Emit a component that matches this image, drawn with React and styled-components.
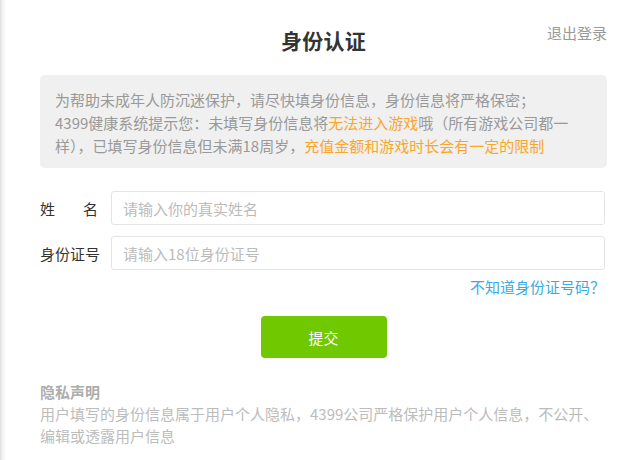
import React from "react";
import styled, { createGlobalStyle } from "styled-components";

const Global = createGlobalStyle`
  html, body { margin: 0; padding: 0; background: #fff; }
  body { font-family: "Noto Sans CJK SC", "Noto Sans", sans-serif; }
  * { box-sizing: border-box; }
`;

const Page = styled.div`
  width: 636px;
  height: 460px;
  overflow: hidden;
  padding: 0 29px 0 40px;
  background: linear-gradient(to right, #dcdcdc 0, #efefef 2px, #fff 6px);
  color: #333;
`;

const Header = styled.div`
  display: grid;
  grid-template-columns: 1fr auto 1fr;
  padding-top: 22px;
  height: 58px;
`;

const Title = styled.h1`
  grid-column: 2;
  margin: 0;
  font-size: 21px;
  line-height: 36px;
  font-weight: 700;
  color: #333;
  letter-spacing: 0.3px;
`;

const Logout = styled.a`
  grid-column: 3;
  justify-self: end;
  align-self: start;
  font-size: 15px;
  line-height: 22px;
  color: #999;
  text-decoration: none;
  margin-top: 0;
`;

const Notice = styled.div`
  margin-top: 17px;
  background: #f0f0f0;
  border-radius: 5px;
  padding: 13px 15px 11px 15px;
  font-size: 15px;
  line-height: 23px;
  color: #999;
`;

const Hi = styled.span`
  color: #f8a72b;
`;

const Form = styled.div`
  margin-top: 23px;
  padding-right: 2px;
  display: flex;
  flex-direction: column;
  gap: 11px;
`;

const Row = styled.div`
  display: flex;
  align-items: center;
  gap: 13px;
`;

const Label = styled.label`
  width: 58px;
  flex: none;
  display: flex;
  justify-content: space-between;
  font-size: 15px;
  color: #333;
  white-space: nowrap;
`;

const Input = styled.input`
  flex: 1;
  height: 34px;
  border: 1px solid #e4e4e4;
  border-radius: 3px;
  padding: 0 11px;
  font-family: inherit;
  font-size: 15px;
  color: #333;
  outline: none;
  &::placeholder { color: #bbb; }
`;

const HelpRow = styled.div`
  display: flex;
  justify-content: flex-end;
  margin-top: 6px;
  padding-right: 2px;
`;

const HelpLink = styled.a`
  font-size: 15px;
  line-height: 22px;
  color: #3aabe2;
  text-decoration: none;
`;

const Actions = styled.div`
  display: flex;
  justify-content: center;
  margin-top: 18px;
`;

const Submit = styled.button`
  width: 126px;
  height: 42px;
  border: none;
  border-radius: 4px;
  background: #6fc800;
  color: #fff;
  font-family: inherit;
  font-size: 15px;
  cursor: pointer;
`;

const Privacy = styled.div`
  margin-top: 23px;
  font-size: 15px;
  line-height: 22px;
`;

const PrivacyTitle = styled.div`
  font-weight: 700;
  color: #adadad;
`;

const PrivacyText = styled.div`
  color: #bcbcbc;
`;

export default function App() {
  return (
    <>
      <Global />
      <Page>
        <Header>
          <Title>身份认证</Title>
          <Logout href="#">退出登录</Logout>
        </Header>
        <Notice>
          为帮助未成年人防沉迷保护，请尽快填身份信息，身份信息将严格保密；
          <br />
          4399健康系统提示您：未填写身份信息将<Hi>无法进入游戏</Hi>哦（所有游戏公司都一
          <br />
          样），已填写身份信息但未满18周岁，<Hi>充值金额和游戏时长会有一定的限制</Hi>
        </Notice>
        <Form>
          <Row>
            <Label><span>姓</span><span>名</span></Label>
            <Input placeholder="请输入你的真实姓名" />
          </Row>
          <Row>
            <Label>身份证号</Label>
            <Input placeholder="请输入18位身份证号" />
          </Row>
        </Form>
        <HelpRow>
          <HelpLink href="#">不知道身份证号码？</HelpLink>
        </HelpRow>
        <Actions>
          <Submit>提交</Submit>
        </Actions>
        <Privacy>
          <PrivacyTitle>隐私声明</PrivacyTitle>
          <PrivacyText>
            用户填写的身份信息属于用户个人隐私，4399公司严格保护用户个人信息，不公开、
            <br />
            编辑或透露用户信息
          </PrivacyText>
        </Privacy>
      </Page>
    </>
  );
}
